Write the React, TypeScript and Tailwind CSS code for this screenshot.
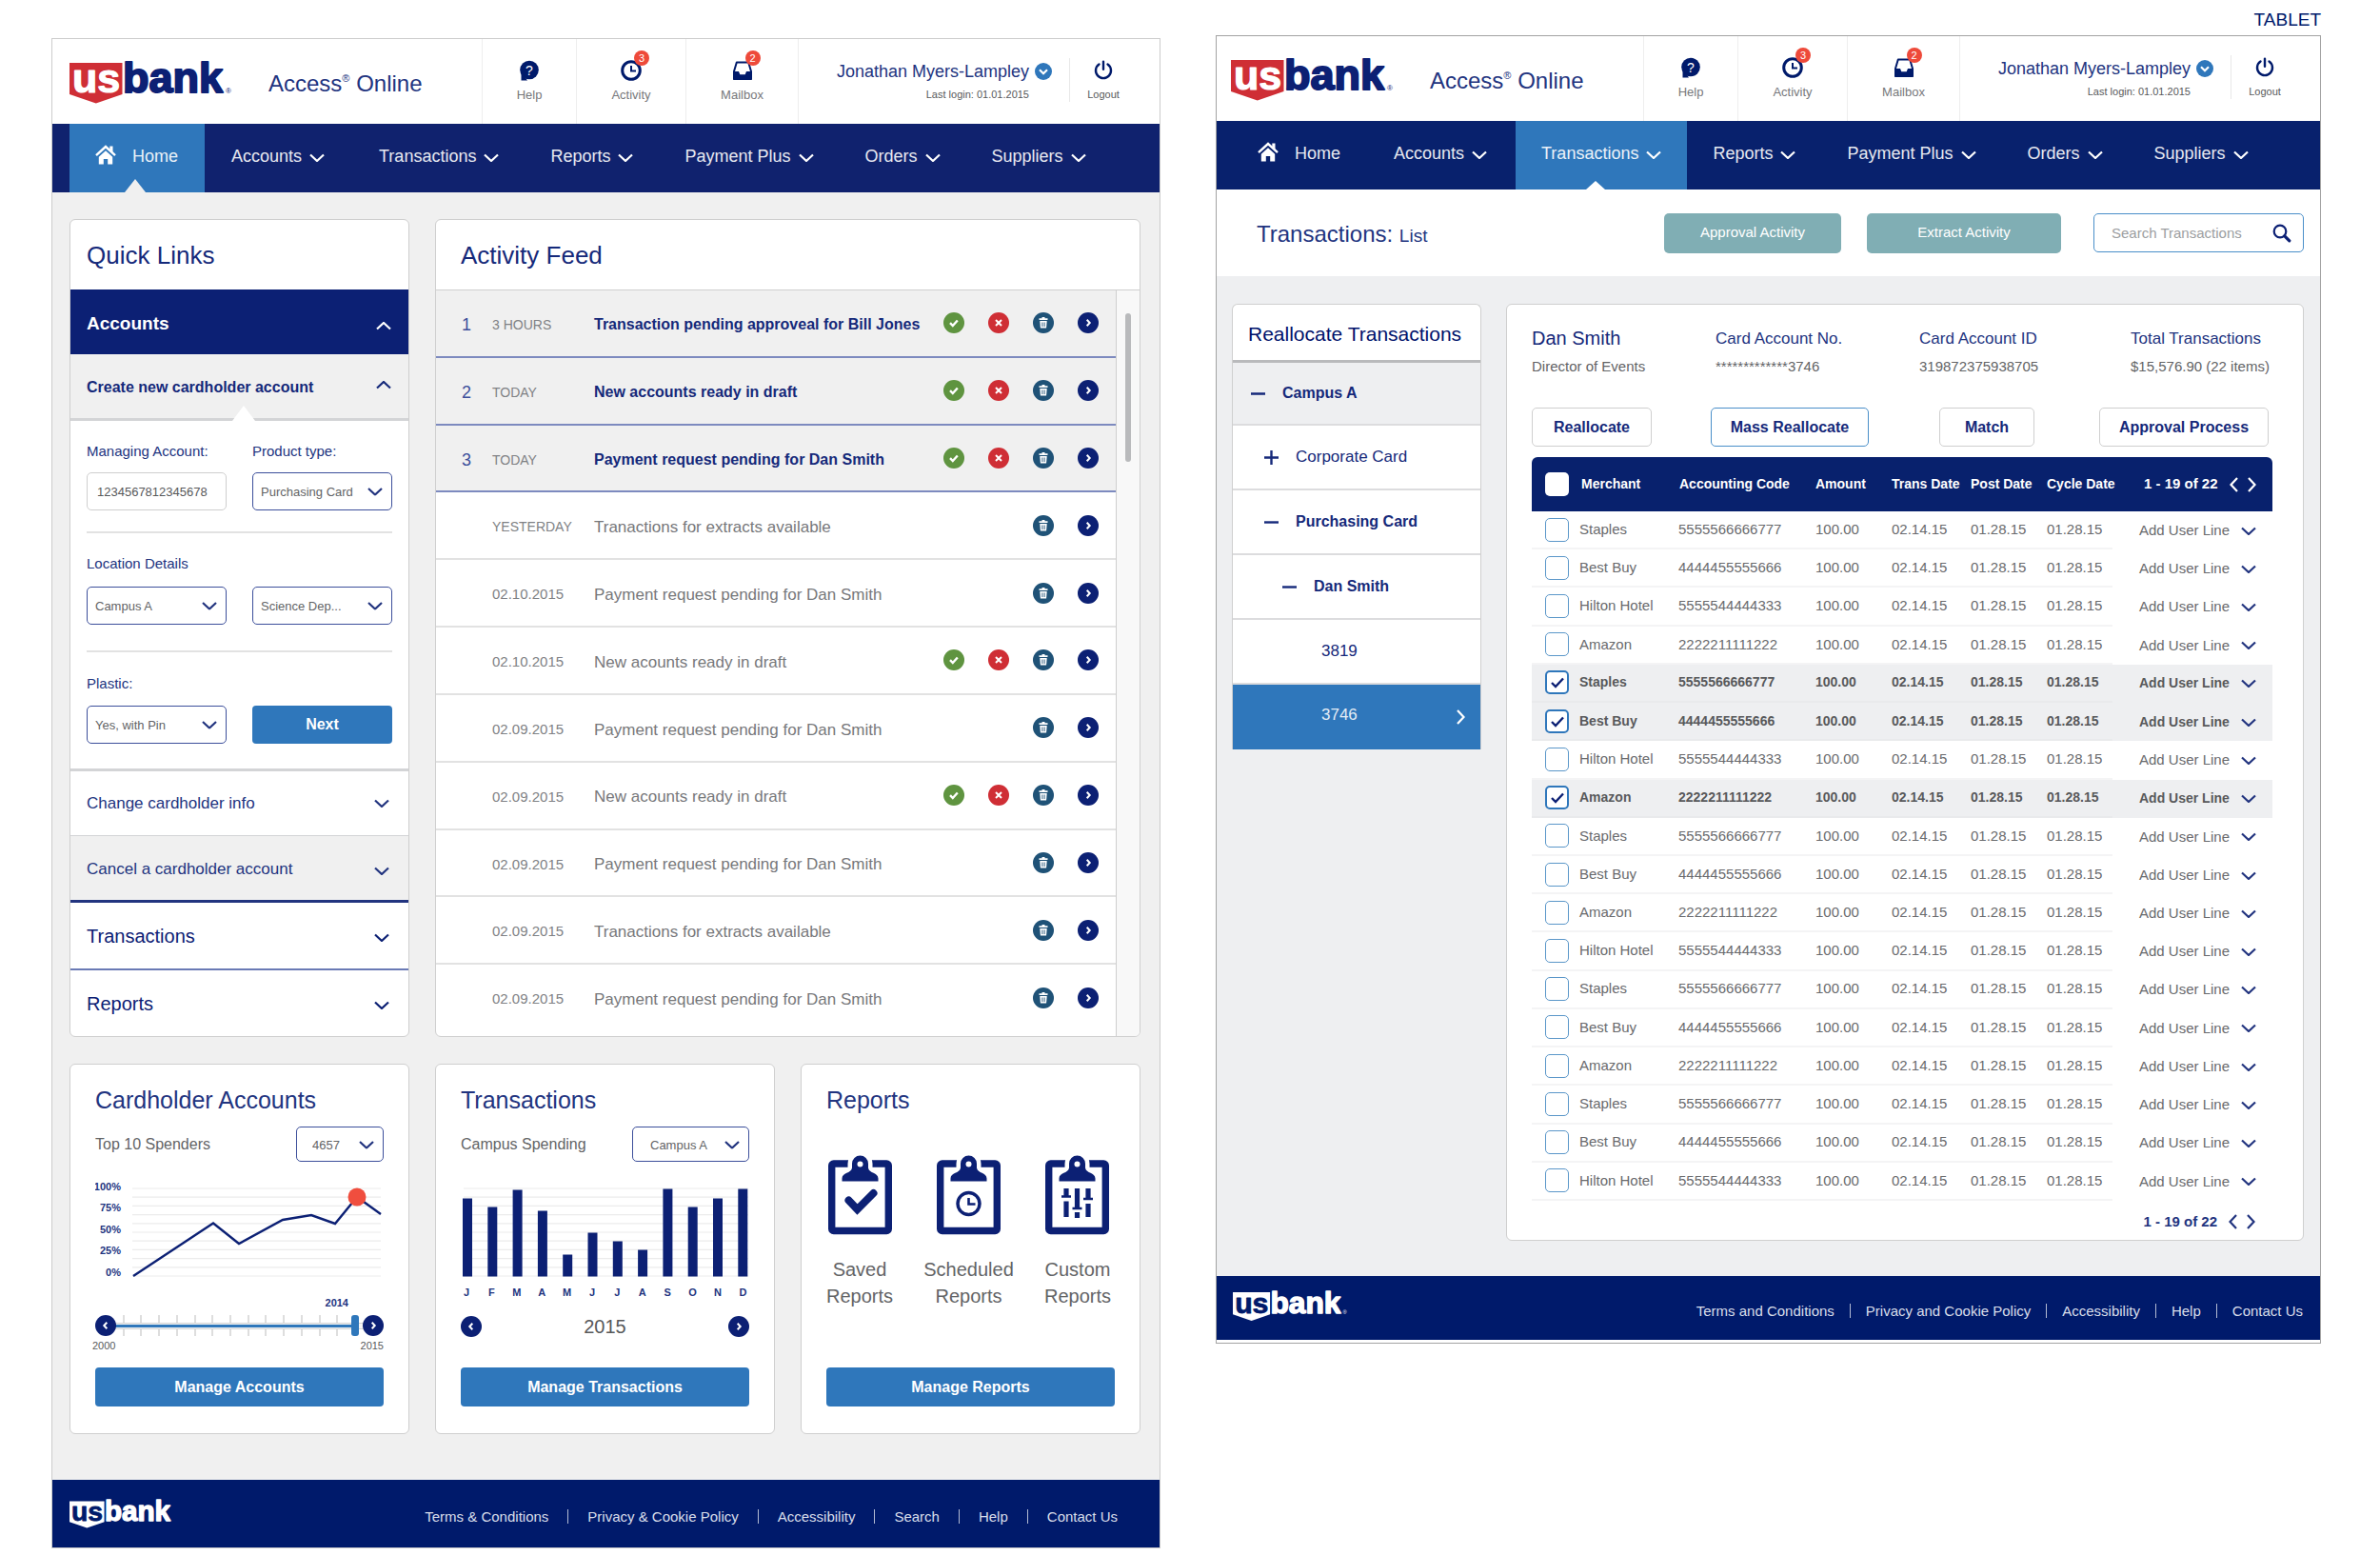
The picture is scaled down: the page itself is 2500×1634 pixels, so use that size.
import { useState } from "react";
import type { ReactNode } from "react";

/* ---------- icons ---------- */

type ChevronProps = { dir?: "down" | "up" | "left" | "right"; className?: string };

function Chevron({ dir = "down", className = "" }: ChevronProps) {
  const horizontal = dir === "left" || dir === "right";
  const d = {
    down: "M1 1.500 8 8l7-6.500",
    up: "M1 7.500 8 1l7 6.500",
    left: "M8 1 1.500 8 8 15",
    right: "M1 1l6.500 7L1 15",
  }[dir];
  return (
    <svg
      viewBox={horizontal ? "0 0 9 16" : "0 0 16 9"}
      className={`${horizontal ? "h-4 w-[9px]" : "h-[9px] w-4"} shrink-0 ${className}`}
      fill="none"
      stroke="currentColor"
      strokeWidth="2.2"
      aria-hidden="true"
    >
      <path d={d} />
    </svg>
  );
}

function Logo({ inverse = false, mark = true, className }: { inverse?: boolean; mark?: boolean; className: string }) {
  return (
    <svg viewBox="0 -10 176 54" className={`${className} shrink-0`} role="img" aria-label="usbank">
      <path d="M0 0h55.500v33L27.800 42.500 0 33z" fill={inverse ? "#fff" : "#cf2e35"} />
      <g fontFamily="Liberation Sans, Arial, sans-serif" fontWeight="700" strokeLinejoin="round">
        <text x="3" y="31" fontSize="43" fill={inverse ? "#001a6b" : "#fff"} stroke={inverse ? "#001a6b" : "#fff"} strokeWidth="1.200">
          us
        </text>
        <text x="56" y="31" fontSize="45" fill={inverse ? "#fff" : "#0c2074"} stroke={inverse ? "#fff" : "#0c2074"} strokeWidth="2">
          bank
        </text>
      </g>
      {mark && (
        <text x="164" y="32" fontSize="8" fontFamily="Liberation Sans, Arial, sans-serif" fill={inverse ? "#fff" : "#0c2074"}>
          ®
        </text>
      )}
    </svg>
  );
}

function HomeIcon() {
  return (
    <svg viewBox="0 0 22 21" className="h-[21px] w-[22px]" fill="currentColor" aria-hidden="true">
      <path d="M15.300 1.500h3.200v6.500l-3.200-3z" />
      <path d="M1 11.200 11 2l10 9.200" fill="none" stroke="currentColor" strokeWidth="2.400" />
      <path d="M3.800 12.800 11 6.300l7.200 6.500V20.500h-5v-5.500H8.800v5.500h-5z" />
    </svg>
  );
}

function HelpIcon() {
  return (
    <svg viewBox="0 0 22 22" className="h-[22px] w-[22px]" aria-hidden="true">
      <circle cx="11" cy="10.500" r="9.800" fill="#001a6b" />
      <path d="M2.500 13v8.500H9z" fill="#001a6b" />
      <text x="11" y="15.500" textAnchor="middle" fontSize="14" fill="#fff" fontFamily="Liberation Sans, Arial, sans-serif">
        ?
      </text>
    </svg>
  );
}

function ClockIcon() {
  return (
    <svg viewBox="0 0 22 22" className="h-[22px] w-[22px]" fill="none" stroke="#001a6b" aria-hidden="true">
      <circle cx="11" cy="11" r="9.300" strokeWidth="3" />
      <path d="M11 6v5.500h5" strokeWidth="2" />
    </svg>
  );
}

function InboxIcon() {
  return (
    <svg viewBox="0 0 22 22" className="h-[22px] w-[22px]" aria-hidden="true">
      <path d="M4.800 2.500h12.400L20 12v8H2v-8z" fill="none" stroke="#001a6b" strokeWidth="2" strokeLinejoin="round" />
      <path d="M1 12h6l1.300 3.200h5.400L15 12h6v8.500H1z" fill="#001a6b" />
    </svg>
  );
}

function PowerIcon() {
  return (
    <svg viewBox="0 0 22 22" className="h-[22px] w-[22px]" fill="none" stroke="#001a6b" strokeLinecap="round" aria-hidden="true">
      <path d="M6.500 4.500a8 8 0 1 0 9 0" strokeWidth="2.400" />
      <path d="M11 1.800v8" strokeWidth="2.400" />
    </svg>
  );
}

function Clipboard({ children }: { children: ReactNode }) {
  return (
    <svg viewBox="0 0 67 84" className="h-[84px] w-[67px]" fill="none" stroke="#0c2074" aria-hidden="true">
      <rect x="3.700" y="9" width="59.600" height="70.500" rx="2" strokeWidth="7.400" />
      <path
        d="M14.500 27.500v-3c0-6.500 9.500-5 10.500-11V9a8.500 8.500 0 0 1 17 0v4.500c1 6 10.500 4.500 10.500 11v3z"
        fill="#fff"
        stroke="#fff"
        strokeWidth="9"
      />
      <path
        d="M14.500 27.500v-3c0-6.500 9.500-5 10.500-11V9a8.500 8.500 0 0 1 17 0v4.500c1 6 10.500 4.500 10.500 11v3z"
        fill="#0c2074"
        stroke="none"
      />
      <circle cx="33.500" cy="9.500" r="3" fill="#fff" stroke="none" />
      {children}
    </svg>
  );
}

/* ---------- shared chrome ---------- */

function ToolCell({ label, width, badge, children }: { label: string; width: string; badge?: number; children: ReactNode }) {
  return (
    <a href="#" className={`${width} flex flex-col items-center border-l border-[#eeeeee] pt-[22px] text-[13px] leading-4 text-[#77787b]`}>
      <span className="relative">
        {children}
        {badge !== undefined && (
          <span className="absolute -top-[10px] left-[14px] flex h-4 w-4 items-center justify-center rounded-full bg-[#ee4a3a] text-[11px] leading-none text-white">
            {badge}
          </span>
        )}
      </span>
      <span className="mt-[7px]">{label}</span>
    </a>
  );
}

function Header({ inset }: { inset: string }) {
  return (
    <header className={`flex h-[89px] bg-white ${inset}`}>
      <div className="flex w-[433px] shrink-0 items-start">
        <Logo className="mt-[15px] w-[176px]" />
        <span className="mt-[33px] ml-[33px] text-[24px] leading-7 whitespace-nowrap text-[#22347f]">
          Access<sup className="-top-[10px] text-[11px]">®</sup> Online
        </span>
      </div>
      <ToolCell label="Help" width="w-[99px]">
        <HelpIcon />
      </ToolCell>
      <ToolCell label="Activity" width="w-[115px]" badge={3}>
        <ClockIcon />
      </ToolCell>
      <ToolCell label="Mailbox" width="w-[118px]" badge={2}>
        <InboxIcon />
      </ToolCell>
      <div className="flex w-[285px] shrink-0 flex-col items-end border-l border-[#eeeeee] pt-[22px] pr-[18px]">
        <button type="button" className="flex items-center gap-[6px] text-[18px] leading-6 text-[#22347f]">
          Jonathan Myers-Lampley
          <span className="flex h-[18px] w-[18px] items-center justify-center rounded-full bg-[#2f77bb] text-white">
            <svg viewBox="0 0 10 7" className="h-[7px] w-[10px]" fill="none" stroke="currentColor" strokeWidth="2.200" aria-hidden="true">
              <path d="m1 1.200 4 4 4-4" />
            </svg>
          </span>
        </button>
        <span className="mt-[5px] mr-6 text-[11px] leading-[14px] text-[#58595b]">Last login: 01.01.2015</span>
      </div>
      <button type="button" className="relative flex w-[72px] shrink-0 flex-col items-center pt-[22px] text-[11px] leading-4 text-[#58595b]">
        <span className="absolute top-5 left-0 h-[46px] w-px bg-[#e8e8e8]" />
        <PowerIcon />
        <span className="mt-[6px]">Logout</span>
      </button>
    </header>
  );
}

const NAV = [
  { label: "Accounts", pad: "pl-7 pr-[30px]" },
  { label: "Transactions", pad: "px-[27px]" },
  { label: "Reports", pad: "px-[27px]" },
  { label: "Payment Plus", pad: "px-[27px]" },
  { label: "Orders", pad: "px-[27px]" },
  { label: "Suppliers", pad: "px-[27px]" },
];

function Nav({ active, inset, tone }: { active: string; inset: string; tone: string }) {
  return (
    <nav className={`flex h-[72px] ${tone} ${inset} text-[18px] text-white/90`}>
      <a
        href="#"
        className={`relative flex w-[142px] items-center gap-[17px] pb-1 pl-[27px] ${active === "Home" ? "bg-[#2f77bb]" : ""}`}
      >
        <span className="pb-1 text-white">
          <HomeIcon />
        </span>
        Home
        {active === "Home" && (
          <svg viewBox="0 0 22 14" className="absolute bottom-0 left-[58px] h-[14px] w-[22px]" aria-hidden="true">
            <path d="M11 0l11 14H0z" fill="#f0f0f0" />
          </svg>
        )}
      </a>
      {NAV.map(({ label, pad }) => (
        <a
          key={label}
          href="#"
          className={`relative flex items-center gap-2 pb-1 whitespace-nowrap ${pad} ${active === label ? "bg-[#2f77bb]" : ""}`}
        >
          {label}
          <Chevron className="mt-[3px] text-white" />
          {active === label && (
            <svg viewBox="0 0 20 9" className="absolute bottom-0 left-[74px] h-[9px] w-5" aria-hidden="true">
              <path d="M10 0l10 9H0z" fill="#fff" />
            </svg>
          )}
        </a>
      ))}
    </nav>
  );
}

function Footer({ links, gap, frame, children }: { links: string[]; gap: string; frame: string; children: ReactNode }) {
  return (
    <footer className={`flex ${frame} items-center justify-between bg-[#001a6b] text-[15px] leading-5 text-[#d9deea]`}>
      {children}
      <ul className={`flex items-center ${gap} pt-[6px] whitespace-nowrap`}>
        {links.map((link, i) => (
          <li key={link} className={`flex items-center ${gap}`}>
            {i > 0 && <span className="h-[15px] w-px bg-[#b3bbd3]" />}
            <a href="#">{link}</a>
          </li>
        ))}
      </ul>
    </footer>
  );
}

type PickProps = { id?: string; label?: string; value: string; className?: string; pad?: string; size?: string };

function Pick({ id, label, value, className = "", pad = "pl-2", size = "h-10" }: PickProps) {
  return (
    <span className={`relative block ${className}`}>
      <select
        id={id}
        aria-label={label}
        className={`block w-full appearance-none rounded-[5px] border border-[#3c4f9b] bg-white pt-[2px] pr-7 text-[13px] text-[#636466] ${size} ${pad}`}
      >
        <option>{value}</option>
      </select>
      <Chevron className="pointer-events-none absolute top-1/2 right-[10px] -translate-y-1/2 text-[#22347f]" />
    </span>
  );
}

/* ---------- dashboard panel ---------- */

function QuickLinks() {
  const label = "block text-[15px] leading-5 text-[#22347f]";
  return (
    <section className="overflow-hidden rounded-[6px] border border-[#cfcfcf] bg-white">
      <h2 className="px-[17px] pt-[21px] pb-5 text-[26px] leading-8 text-[#15297a]">Quick Links</h2>
      <button type="button" className="flex h-[68px] w-full items-center justify-between bg-[#0c2074] pt-1 pr-[18px] pl-[17px] text-[19px] font-bold text-white">
        Accounts
        <Chevron dir="up" className="mt-1" />
      </button>
      <button
        type="button"
        className="relative flex h-[70px] w-full items-center justify-between border-b-3 border-[#d3d4d6] bg-[#f0f0f0] pt-[2px] pr-[18px] pl-[17px] text-[16px] font-bold text-[#15297a]"
      >
        Create new cardholder account
        <Chevron dir="up" className="-mt-1" />
        <svg viewBox="0 0 24 16" className="absolute -bottom-[3px] left-[170px] h-4 w-6" aria-hidden="true">
          <path d="M12 0l12 16H0z" fill="#fff" />
        </svg>
      </button>
      <form className="border-b-3 border-[#d3d4d6] px-[17px] pt-[22px] pb-[26px]" onSubmit={(e) => e.preventDefault()}>
        <div className="grid grid-cols-2 gap-x-[27px] gap-y-3">
          <label htmlFor="managing" className={label}>
            Managing Account:
          </label>
          <label htmlFor="product" className={label}>
            Product type:
          </label>
          <input
            id="managing"
            defaultValue="1234567812345678"
            className="h-10 w-full min-w-0 rounded-[5px] border border-[#cfcfcf] px-[10px] text-[13px] text-[#58595b]"
          />
          <Pick id="product" value="Purchasing Card" />
        </div>
        <hr className="my-[22px] border-t-2 border-[#e2e2e2]" />
        <div className="grid grid-cols-2 gap-x-[27px] gap-y-[14px]">
          <label htmlFor="campus" className={`${label} col-span-2`}>
            Location Details
          </label>
          <Pick id="campus" value="Campus A" />
          <Pick label="Department" value="Science Dep..." />
        </div>
        <hr className="mt-[27px] mb-[23px] border-t-2 border-[#e2e2e2]" />
        <div className="grid grid-cols-2 gap-x-[27px] gap-y-[13px]">
          <label htmlFor="plastic" className={`${label} col-span-2`}>
            Plastic:
          </label>
          <Pick id="plastic" value="Yes, with Pin" />
          <button type="submit" className="h-10 rounded-[4px] bg-[#2f77bb] text-[16px] font-bold text-white">
            Next
          </button>
        </div>
      </form>
      <button type="button" className="flex h-[68px] w-full items-center justify-between border-b border-[#d3d4d6] pr-5 pl-[17px] text-[17px] text-[#22347f]">
        Change cardholder info
        <Chevron />
      </button>
      <button
        type="button"
        className="flex h-[70px] w-full items-center justify-between border-b-3 border-[#22347f] bg-[#f0f0f0] pt-[2px] pr-5 pl-[17px] text-[17px] text-[#22347f]"
      >
        Cancel a cardholder account
        <Chevron className="mt-1" />
      </button>
      <button type="button" className="flex h-[71px] w-full items-center justify-between border-b-2 border-[#6a7ab5] pr-5 pl-[17px] text-[20px] text-[#0c2074]">
        Transactions
        <Chevron className="mt-1" />
      </button>
      <button type="button" className="flex h-[69px] w-full items-center justify-between pr-5 pl-[17px] text-[20px] text-[#0c2074]">
        Reports
        <Chevron className="mt-1" />
      </button>
    </section>
  );
}

const FEED = [
  { when: "3 HOURS", text: "Transaction pending approveal for Bill Jones", decide: true, fresh: true },
  { when: "TODAY", text: "New accounts ready in draft", decide: true, fresh: true },
  { when: "TODAY", text: "Payment request pending for Dan Smith", decide: true, fresh: true },
  { when: "YESTERDAY", text: "Tranactions for extracts available" },
  { when: "02.10.2015", text: "Payment request pending for Dan Smith" },
  { when: "02.10.2015", text: "New acounts ready in draft", decide: true },
  { when: "02.09.2015", text: "Payment request pending for Dan Smith" },
  { when: "02.09.2015", text: "New acounts ready in draft", decide: true },
  { when: "02.09.2015", text: "Payment request pending for Dan Smith" },
  { when: "02.09.2015", text: "Tranactions for extracts available" },
  { when: "02.09.2015", text: "Payment request pending for Dan Smith" },
];

function RoundButton({ label, tone, children }: { label: string; tone: string; children: ReactNode }) {
  return (
    <button type="button" aria-label={label} className={`flex h-[22px] w-[22px] shrink-0 items-center justify-center rounded-full ${tone}`}>
      <svg viewBox="0 0 22 22" className="h-[22px] w-[22px]" fill="none" stroke="#fff" strokeWidth="2" aria-hidden="true">
        {children}
      </svg>
    </button>
  );
}

function ActivityFeed() {
  return (
    <section className="col-span-2 flex flex-col overflow-hidden rounded-[6px] border border-[#cfcfcf] bg-white">
      <h2 className="border-b border-[#cfcfcf] px-[26px] pt-[21px] pb-5 text-[26px] leading-8 text-[#15297a]">Activity Feed</h2>
      <div className="flex flex-1">
        <ul className="flex flex-1 flex-col pb-[6px]">
          {FEED.map((row, i) => (
            <li
              key={i}
              className={`flex flex-1 items-center gap-[25px] pr-[18px] pl-[27px] ${
                row.fresh ? "border-b-2 border-[#7d8abf] bg-[#f0f0f0]" : i < FEED.length - 1 ? "border-b-2 border-[#e2e2e2]" : ""
              }`}
            >
              <p className="flex flex-1 items-center pt-1 whitespace-nowrap">
                <span className="w-8 text-[18px] text-[#3c4f9b]">{row.fresh ? i + 1 : ""}</span>
                <span className={`w-[107px] text-[#808285] ${/^\d\d\./.test(row.when) ? "text-[15px]" : "text-[14px]"}`}>{row.when}</span>
                <span className={row.fresh ? "text-[16px] font-bold text-[#15297a]" : "text-[17px] text-[#77787b]"}>{row.text}</span>
              </p>
              {row.decide && (
                <>
                  <RoundButton label="Approve" tone="bg-[#5f9440]">
                    <path d="M7 11.200l2.800 2.800 5-5.500" strokeWidth="2.400" />
                  </RoundButton>
                  <RoundButton label="Reject" tone="bg-[#cf2e35]">
                    <path d="M8 8l6 6M14 8l-6 6" />
                  </RoundButton>
                </>
              )}
              <RoundButton label="Delete" tone="bg-[#1f5277]">
                <path d="M6.500 7.200h9M9.500 5.800h3" strokeWidth="1.800" />
                <path d="M7.300 9h7.400l-.6 7.500H7.900z" fill="#fff" stroke="none" />
                <path d="M9.600 10.500v4.500M11 10.500v4.500M12.400 10.500v4.500" stroke="#1f5277" strokeWidth=".6" />
              </RoundButton>
              <RoundButton label="Open" tone="bg-[#0c2074]">
                <path d="M9.700 7.800l3 3.200-3 3.200" />
              </RoundButton>
            </li>
          ))}
        </ul>
        <div className="flex w-7 justify-center border-l border-[#cfcfcf] bg-[#f8f8f8] pt-6">
          <span className="h-[156px] w-[6px] rounded-full bg-[#b9babc]" />
        </div>
      </div>
    </section>
  );
}

const GRID = Array.from({ length: 11 }, (_, i) => 8 + i * 9.2);
const SPEND: [number, number][] = [
  [40, 100],
  [124, 44.5],
  [151, 66],
  [197, 41],
  [227, 36],
  [252, 45],
  [275, 17],
  [300, 35],
];

function Arrow({ dir }: { dir: "left" | "right" }) {
  return (
    <RoundButton label={dir === "left" ? "Previous" : "Next"} tone="relative z-10 bg-[#0c2074]">
      <path d={dir === "left" ? "M12.300 7.800l-3 3.200 3 3.200" : "M9.700 7.800l3 3.200-3 3.200"} />
    </RoundButton>
  );
}

function CardTitle({ children }: { children: ReactNode }) {
  return <h2 className="text-[25px] leading-8 text-[#22347f]">{children}</h2>;
}

function CardAction({ children }: { children: ReactNode }) {
  return (
    <button type="button" className="mt-auto h-[41px] rounded-[4px] bg-[#2f77bb] text-[16px] font-bold text-white">
      {children}
    </button>
  );
}

const CARD = "flex h-[389px] flex-col rounded-[6px] border border-[#cfcfcf] bg-white px-[26px] pt-[21px] pb-7";

function CardholderAccounts() {
  const [year, setYear] = useState(2014);
  return (
    <section className={CARD}>
      <CardTitle>Cardholder Accounts</CardTitle>
      <div className="mt-3 flex items-center justify-between text-[16px] text-[#636466]">
        Top 10 Spenders
        <Pick label="Account" value="4657" className="w-[92px]" pad="pl-4" size="h-[37px]" />
      </div>
      <svg viewBox="0 0 303 108" className="mt-5 w-full" role="img" aria-label="Top 10 spenders">
        {GRID.map((y) => (
          <path key={y} d={`M39 ${y}H300`} stroke="#ececec" strokeWidth="1.200" />
        ))}
        {["100%", "75%", "50%", "25%", "0%"].map((t, i) => (
          <text
            key={t}
            x="27"
            y={10 + i * 22.4}
            textAnchor="end"
            fontSize="11"
            fontWeight="700"
            fill="#22347f"
            fontFamily="Liberation Sans, Arial, sans-serif"
          >
            {t}
          </text>
        ))}
        <polyline points={SPEND.map((p) => p.join(",")).join(" ")} fill="none" stroke="#0c2074" strokeWidth="2.400" />
        <circle cx="275" cy="17" r="9.500" fill="#f04e3e" />
      </svg>
      <p className="mt-3 mr-[37px] text-right text-[11px] leading-4 font-bold text-[#22347f]">{year}</p>
      <div className="relative mt-[5px] flex justify-between">
        <span className="absolute inset-x-[10px] inset-y-0 flex justify-between">
          {Array.from({ length: 16 }, (_, i) => (
            <span key={i} className="w-[2px] bg-[#dedede]" />
          ))}
        </span>
        <span className="absolute inset-x-[11px] top-2 h-[7px] border border-[#d3d4d6] bg-[#f4f4f4]">
          <span className="mt-px block h-[3px] bg-[#2f77bb]" style={{ width: `${((year - 2000) / 15) * 100}%` }} />
        </span>
        <input
          type="range"
          aria-label="Year"
          min={2000}
          max={2015}
          value={year}
          onChange={(e) => setYear(Number(e.target.value))}
          className="absolute inset-x-[7px] inset-y-0 h-[22px] appearance-none bg-transparent [&::-webkit-slider-thumb]:h-[22px] [&::-webkit-slider-thumb]:w-2 [&::-webkit-slider-thumb]:appearance-none [&::-webkit-slider-thumb]:rounded-[3px] [&::-webkit-slider-thumb]:bg-[#2f77bb]"
        />
        <Arrow dir="left" />
        <Arrow dir="right" />
      </div>
      <div className="mt-[2px] -ml-[3px] flex justify-between text-[11px] leading-4 text-[#58595b]">
        <span>2000</span>
        <span>2015</span>
      </div>
      <CardAction>Manage Accounts</CardAction>
    </section>
  );
}

const MONTHS: [string, number][] = [
  ["J", 82],
  ["F", 73],
  ["M", 91],
  ["A", 69],
  ["M", 23],
  ["J", 46],
  ["J", 37],
  ["A", 28],
  ["S", 92],
  ["O", 73],
  ["N", 82],
  ["D", 92],
];

function TransactionsCard() {
  return (
    <section className={CARD}>
      <CardTitle>Transactions</CardTitle>
      <div className="mt-3 flex items-center justify-between text-[16px] text-[#636466]">
        Campus Spending
        <Pick label="Campus" value="Campus A" className="w-[123px]" pad="pl-[18px]" size="h-[37px]" />
      </div>
      <svg viewBox="0 0 303 125" className="mt-5 w-full" role="img" aria-label="Campus spending by month">
        {GRID.map((y) => (
          <path key={y} d={`M3 ${y}H302`} stroke="#ececec" strokeWidth="1.200" />
        ))}
        {MONTHS.map(([m, h], i) => (
          <g key={i}>
            <rect x={2 + i * 26.3} y={100.5 - h} width="10" height={h} fill="#0c2074" />
            <text
              x={6 + i * 26.4}
              y="121"
              textAnchor="middle"
              fontSize="11"
              fontWeight="700"
              fill="#22347f"
              fontFamily="Liberation Sans, Arial, sans-serif"
            >
              {m}
            </text>
          </g>
        ))}
      </svg>
      <div className="mt-[17px] flex items-center justify-between text-[20px] leading-[22px] text-[#58595b]">
        <Arrow dir="left" />
        2015
        <Arrow dir="right" />
      </div>
      <CardAction>Manage Transactions</CardAction>
    </section>
  );
}

function ReportLink({ label, children }: { label: string; children: ReactNode }) {
  return (
    <a href="#" className="flex flex-col items-center gap-[22px] text-center text-[20px] leading-7 text-[#636466]">
      <Clipboard>{children}</Clipboard>
      <span>
        {label}
        <br />
        Reports
      </span>
    </a>
  );
}

function ReportsCard() {
  return (
    <section className={CARD}>
      <CardTitle>Reports</CardTitle>
      <div className="mt-[42px] flex justify-between pr-1">
        <ReportLink label="Saved">
          <path d="M21.500 47.500l9 9.500 17-17" strokeWidth="8" strokeLinecap="round" strokeLinejoin="miter" />
        </ReportLink>
        <ReportLink label="Scheduled">
          <circle cx="33.500" cy="51" r="11.500" strokeWidth="3.500" />
          <path d="M33.500 45v6.500h7" strokeWidth="2.600" />
        </ReportLink>
        <ReportLink label="Custom">
          <g strokeWidth="5.200">
            <path d="M22 35v8M33.500 35v20M45 35v10.500" />
            <path d="M22 48.500V65M33.500 60v6M45 51v14" />
          </g>
          <path d="M17 43.500h10M28.500 56h10M40 46h10" strokeWidth="2.600" />
        </ReportLink>
      </div>
      <CardAction>Manage Reports</CardAction>
    </section>
  );
}

function Dashboard() {
  return (
    <div className="mt-10 border border-[#cccccc] bg-[#f0f0f0]">
      <Header inset="pl-[18px]" />
      <Nav active="Home" inset="pl-[18px]" tone="bg-[#10226e]" />
      <main className="grid grid-cols-3 gap-x-[27px] gap-y-7 pt-7 pr-5 pb-12 pl-[18px]">
        <QuickLinks />
        <ActivityFeed />
        <CardholderAccounts />
        <TransactionsCard />
        <ReportsCard />
      </main>
      <Footer
        links={["Terms & Conditions", "Privacy & Cookie Policy", "Accessibility", "Search", "Help", "Contact Us"]}
        gap="gap-5"
        frame="h-[71px] pr-11 pl-[18px]"
      >
        <Logo inverse mark={false} className="-mt-1 w-[116px]" />
      </Footer>
    </div>
  );
}

/* ---------- transactions panel ---------- */

const TREE = [
  { label: "Campus A", sign: "-", pad: "h-[66px] pl-[19px]", strong: true, shade: true },
  { label: "Corporate Card", sign: "+", pad: "h-[68px] pl-[33px]" },
  { label: "Purchasing Card", sign: "-", pad: "h-[68px] pl-[33px]", strong: true },
  { label: "Dan Smith", sign: "-", pad: "h-[68px] pl-[52px]", strong: true },
  { label: "3819", sign: "", pad: "h-[68px] pl-[93px]" },
];

function ReallocateTree() {
  return (
    <aside className="w-[262px] shrink-0 overflow-hidden rounded-t-[6px] border border-b-0 border-[#cfcfcf] bg-white">
      <h2 className="border-b-3 border-[#b9babc] pt-[19px] pb-[15px] pl-4 text-[21px] leading-6 whitespace-nowrap text-[#00126b]">
        Reallocate Transactions
      </h2>
      <ul>
        {TREE.map((n) => (
          <li key={n.label}>
            <button
              type="button"
              className={`flex w-full items-center gap-[18px] border-b-2 border-[#dcdcde] ${n.pad} text-[#15297a] ${
                n.strong ? "text-[16px] font-bold" : "text-[17px]"
              } ${n.shade ? "bg-[#eeeff1]" : ""}`}
            >
              {n.sign && (
                <svg viewBox="0 0 15 15" className="h-[15px] w-[15px]" stroke="currentColor" strokeWidth="2.400" aria-hidden="true">
                  <path d={n.sign === "+" ? "M0 7.500h15M7.500 0v15" : "M0 7.500h15"} />
                </svg>
              )}
              {n.label}
            </button>
          </li>
        ))}
        <li>
          <button type="button" className="-mx-px flex h-[68px] w-[262px] items-center justify-between bg-[#2f77bb] pr-[17px] pb-1 pl-[94px] text-[17px] text-[#e3ecf5]">
            3746
            <Chevron dir="right" className="mt-1 text-white" />
          </button>
        </li>
      </ul>
    </aside>
  );
}

const CODES: Record<string, string> = {
  Staples: "5555566666777",
  "Best Buy": "4444455555666",
  "Hilton Hotel": "5555544444333",
  Amazon: "2222211111222",
};

const MERCHANTS = [
  "Staples", "Best Buy", "Hilton Hotel", "Amazon", "Staples", "Best Buy", "Hilton Hotel", "Amazon", "Staples",
  "Best Buy", "Amazon", "Hilton Hotel", "Staples", "Best Buy", "Amazon", "Staples", "Best Buy", "Hilton Hotel",
];

function Tick({ label, checked, onChange, head = false }: { label: string; checked: boolean; onChange: () => void; head?: boolean }) {
  return (
    <span className="relative block h-[25px] w-[25px]">
      <input
        type="checkbox"
        aria-label={label}
        checked={checked}
        onChange={onChange}
        className={`block h-[25px] w-[25px] appearance-none rounded-[5px] bg-white ${
          head ? "" : checked ? "border-2 border-[#2f77bb]" : "border border-[#5b97c9]"
        }`}
      />
      {checked && (
        <svg viewBox="0 0 14 12" className="pointer-events-none absolute top-[7px] left-[6px] h-3 w-[14px]" fill="none" stroke="#0c2074" strokeWidth="2.400" aria-hidden="true">
          <path d="M1 6l4 4 8-8.500" />
        </svg>
      )}
    </span>
  );
}

function Pager() {
  return (
    <span className="flex items-center text-[15px] whitespace-nowrap">
      <span className="mr-3">1 - 19 of 22</span>
      <button type="button" aria-label="Previous page" className="mr-[10px]">
        <Chevron dir="left" />
      </button>
      <button type="button" aria-label="Next page">
        <Chevron dir="right" />
      </button>
    </span>
  );
}

function TransactionTable() {
  const [picked, setPicked] = useState<number[]>([4, 5, 7]);
  const [all, setAll] = useState(false);
  const toggle = (i: number) => setPicked((p) => (p.includes(i) ? p.filter((x) => x !== i) : [...p, i]));
  return (
    <table className="mt-[11px] h-[781px] w-full table-fixed border-separate border-spacing-0 text-left whitespace-nowrap">
      <colgroup>
        <col className="w-[50px]" />
        <col className="w-[104px]" />
        <col className="w-[144px]" />
        <col className="w-[80px]" />
        <col className="w-[83px]" />
        <col className="w-[80px]" />
        <col className="w-[69px]" />
        <col className="w-[135px]" />
        <col />
      </colgroup>
      <thead className="text-[14px] text-white">
        <tr className="[&>th]:h-[57px] [&>th]:bg-[#08216d]">
          <th className="rounded-tl-[6px] pl-[14px]">
            <Tick label="Select all" head checked={all} onChange={() => setAll(!all)} />
          </th>
          <th className="pl-[2px]">Merchant</th>
          <th className="pl-px">Accounting Code</th>
          <th>Amount</th>
          <th>Trans Date</th>
          <th>Post Date</th>
          <th>Cycle Date</th>
          <th colSpan={2} className="rounded-tr-[6px] pl-[33px]">
            <Pager />
          </th>
        </tr>
      </thead>
      <tbody className="text-[#6a6b6e]">
        {MERCHANTS.map((m, i) => {
          const on = picked.includes(i);
          return (
            <tr
              key={i}
              className={`[&>td]:h-10 [&>td:nth-child(-n+7)]:border-b-2 ${
                on ? "bg-[#eeeff1] text-[14px] font-bold text-[#58595b] [&>td]:border-[#e9eaec]" : "text-[15px] [&>td]:border-[#f4f4f5]"
              }`}
            >
              <td className="pl-[14px]">
                <Tick label={`Select ${m}`} checked={on} onChange={() => toggle(i)} />
              </td>
              <td>{m}</td>
              <td>{CODES[m]}</td>
              <td>100.00</td>
              <td>02.14.15</td>
              <td>01.28.15</td>
              <td>01.28.15</td>
              <td className="pl-7">
                <button type="button">Add User Line</button>
              </td>
              <td>
                <button type="button" aria-label="Expand" className="block text-[#22347f]">
                  <Chevron />
                </button>
              </td>
            </tr>
          );
        })}
      </tbody>
    </table>
  );
}

const FACTS = [
  ["Card Account No.", "*************3746"],
  ["Card Account ID", "319872375938705"],
  ["Total Transactions", "$15,576.90 (22 items)"],
];

function AccountCard() {
  const action = "h-[41px] rounded-[5px] border text-[16px] font-bold text-[#15297a]";
  return (
    <section className="min-w-0 flex-1 rounded-[6px] border border-[#cfcfcf] bg-white pt-[23px] pr-8 pb-[9px] pl-[26px]">
      <dl className="grid grid-cols-[193fr_214fr_222fr_149fr] text-[15px] leading-5 whitespace-nowrap text-[#636466]">
        <div>
          <dt className="text-[20px] leading-6 text-[#15297a]">Dan Smith</dt>
          <dd className="mt-2">Director of Events</dd>
        </div>
        {FACTS.map(([k, v]) => (
          <div key={k}>
            <dt className="pt-px text-[17px] leading-6 text-[#22347f]">{k}</dt>
            <dd className="mt-[7px]">{v}</dd>
          </div>
        ))}
      </dl>
      <div className="mt-[33px] grid grid-cols-[188fr_240fr_168fr_182fr]">
        <button type="button" className={`${action} w-[126px] border-[#cfcfcf]`}>
          Reallocate
        </button>
        <button type="button" className={`${action} w-[166px] border-[#4a8fc9]`}>
          Mass Reallocate
        </button>
        <button type="button" className={`${action} w-[100px] border-[#cfcfcf]`}>
          Match
        </button>
        <button type="button" className={`${action} w-[178px] border-[#cfcfcf]`}>
          Approval Process
        </button>
      </div>
      <TransactionTable />
      <div className="mt-3 flex justify-end pr-[18px] leading-5 font-bold text-[#22347f]">
        <Pager />
      </div>
    </section>
  );
}

function TransactionsPanel() {
  return (
    <div className="border border-[#a3a3a3] bg-white pb-[3px]">
      <Header inset="pl-[15px]" />
      <Nav active="Transactions" inset="pl-4" tone="bg-[#08216d]" />
      <div className="flex h-[91px] items-center pr-[17px] pl-[42px]">
        <h1 className="flex-1 pt-[3px] text-[24px] text-[#22347f]">
          Transactions: <span className="text-[19px]">List</span>
        </h1>
        <button type="button" className="mr-[27px] h-[42px] w-[186px] rounded-[5px] bg-[#80aeb4] text-[15px] text-white">
          Approval Activity
        </button>
        <button type="button" className="mr-[34px] h-[42px] w-[204px] rounded-[5px] bg-[#80aeb4] text-[15px] text-white">
          Extract Activity
        </button>
        <label className="relative block w-[221px]">
          <input
            type="search"
            aria-label="Search Transactions"
            placeholder="Search Transactions"
            className="block h-[41px] w-full rounded-[5px] border border-[#4a8fc9] bg-white pr-12 pl-[18px] text-[15px] placeholder:text-[#9c9ea1]"
          />
          <svg viewBox="0 0 20 20" className="pointer-events-none absolute top-[11px] right-[13px] h-5 w-5" fill="none" stroke="#0c2074" aria-hidden="true">
            <circle cx="8" cy="8" r="6.300" strokeWidth="2.200" />
            <path d="M12.800 12.800l5 5" strokeWidth="3.200" strokeLinecap="round" />
          </svg>
        </label>
      </div>
      <main className="flex items-start gap-[26px] bg-[#eeeff1] pt-[29px] pr-[17px] pb-[37px] pl-4">
        <ReallocateTree />
        <AccountCard />
      </main>
      <Footer
        links={["Terms and Conditions", "Privacy and Cookie Policy", "Accessibility", "Help", "Contact Us"]}
        gap="gap-4"
        frame="h-[67px] pr-[18px] pl-[17px]"
      >
        <Logo inverse className="-mt-2 w-[124px]" />
      </Footer>
    </div>
  );
}

export default function App() {
  return (
    <div className="grid min-h-screen grid-cols-[1165fr_1161fr] items-start gap-[58px] bg-white pr-[62px] pl-[54px] font-['Liberation_Sans',Arial,sans-serif] antialiased">
      <Dashboard />
      <div>
        <p className="pt-[9px] pb-1 text-right text-[19px] leading-6 text-[#001a6b]">TABLET</p>
        <TransactionsPanel />
      </div>
    </div>
  );
}
